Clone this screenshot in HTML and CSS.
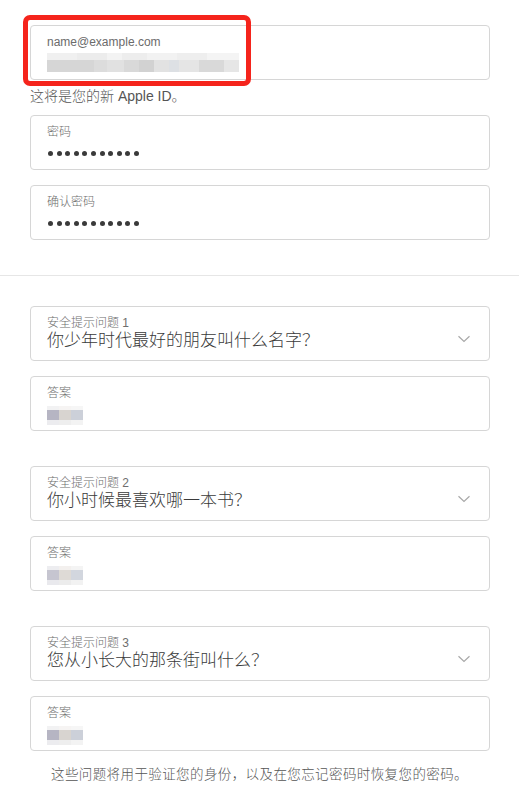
FILE: index.html
```html
<!DOCTYPE html>
<html lang="zh-CN">
<head>
<meta charset="utf-8">
<title>Apple ID</title>
<link rel="stylesheet" href="styles.css">
</head>
<body>
<main class="page">
  <section class="account">
    <div class="field">
      <div class="label label-email">name@example.com</div>
      <div class="value"><span class="mosaic mosaic-email"></span></div>
      <span class="highlight"></span>
    </div>
    <p class="hint">这将是您的新 Apple ID。</p>
    <div class="field">
      <div class="label">密码</div>
      <div class="value dots"><span></span><span></span><span></span><span></span><span></span><span></span><span></span><span></span><span></span><span></span><span></span></div>
    </div>
    <div class="field">
      <div class="label">确认密码</div>
      <div class="value dots"><span></span><span></span><span></span><span></span><span></span><span></span><span></span><span></span><span></span><span></span><span></span></div>
    </div>
  </section>

  <hr class="divider">

  <section class="security">
    <div class="group">
      <div class="field select">
        <div class="select-body">
          <div class="label">安全提示问题 1</div>
          <div class="question">你少年时代最好的朋友叫什么名字？</div>
        </div>
        <svg class="chevron" width="14" height="8" viewBox="0 0 14 8"><path d="M1.5 1.2 L7 6.4 L12.5 1.2" fill="none" stroke="#a8a8a8" stroke-width="1.2"/></svg>
      </div>
      <div class="field">
        <div class="label">答案</div>
        <div class="value"><span class="mosaic mosaic-answer"></span></div>
      </div>
    </div>

    <div class="group">
      <div class="field select">
        <div class="select-body">
          <div class="label">安全提示问题 2</div>
          <div class="question">你小时候最喜欢哪一本书？</div>
        </div>
        <svg class="chevron" width="14" height="8" viewBox="0 0 14 8"><path d="M1.5 1.2 L7 6.4 L12.5 1.2" fill="none" stroke="#a8a8a8" stroke-width="1.2"/></svg>
      </div>
      <div class="field">
        <div class="label">答案</div>
        <div class="value"><span class="mosaic mosaic-answer alt"></span></div>
      </div>
    </div>

    <div class="group">
      <div class="field select">
        <div class="select-body">
          <div class="label">安全提示问题 3</div>
          <div class="question">您从小长大的那条街叫什么？</div>
        </div>
        <svg class="chevron" width="14" height="8" viewBox="0 0 14 8"><path d="M1.5 1.2 L7 6.4 L12.5 1.2" fill="none" stroke="#a8a8a8" stroke-width="1.2"/></svg>
      </div>
      <div class="field">
        <div class="label">答案</div>
        <div class="value"><span class="mosaic mosaic-answer"></span></div>
      </div>
    </div>
  </section>

  <p class="footnote">这些问题将用于验证您的身份，以及在您忘记密码时恢复您的密码。</p>
</main>
</body>
</html>
```

FILE: styles.css
```css
* { box-sizing: border-box; }

html, body {
  margin: 0;
  padding: 0;
  background: #ffffff;
}

body {
  font-family: "Liberation Sans", "Noto Sans CJK SC", sans-serif;
  color: #333333;
}

.page {
  padding-top: 25px;
}

.account,
.security {
  padding: 0 29px 0 30px;
  display: flex;
  flex-direction: column;
}

.account {
  gap: 15px;
}

.security {
  gap: 35px;
}

.group {
  display: flex;
  flex-direction: column;
  gap: 15px;
}

.field {
  position: relative;
  height: 55px;
  border: 1px solid #d6d6d6;
  border-radius: 4px;
  padding: 9px 16px 0 16px;
  background: #ffffff;
}

.label {
  font-size: 12px;
  line-height: 14px;
  font-weight: 300;
  color: #6e6e6e;
  height: 14px;
}

.label-email {
  color: #6b6b6b;
  font-weight: 400;
}

.value {
  height: 20px;
  margin-top: 4px;
  display: flex;
  align-items: center;
}

.dots {
  gap: 3.6px;
  padding-left: 1px;
}

.dots span {
  width: 5px;
  height: 5px;
  border-radius: 50%;
  background: #3a3a3a;
}

.hint {
  margin: -8px 0 -5px 0;
  font-size: 14px;
  line-height: 18px;
  font-weight: 300;
  color: #555555;
}

.divider {
  margin: 35px 0 30px 0;
  border: 0;
  border-top: 1px solid #e6e6e6;
  height: 0;
}

.select {
  display: flex;
  align-items: center;
  padding-right: 18px;
}

.select-body {
  flex: 1;
  align-self: flex-start;
}

.question {
  font-size: 17px;
  line-height: 22px;
  font-weight: 300;
  color: #3a3a3a;
}

.chevron {
  flex: none;
  margin-top: 1px;
}

.mosaic {
  display: block;
}

.mosaic-email {
  width: 192px;
  height: 19px;
  margin-top: -1px;
  background:
    linear-gradient(to right,
      #f0f0f0 0 30px, #ececec 30px 60px, #f3f3f3 60px 75px, #ededed 75px 100px,
      #f2f2f2 100px 130px, #eeeeee 130px 160px, #f4f4f4 160px 192px) 0 0 / 192px 7px no-repeat,
    linear-gradient(to right,
      #d6d6d6 0 47px, #dcdcdc 47px 60px, #e1e1e1 60px 77px, #d9d9d9 77px 92px,
      #d2d2d2 92px 107px, #e2e2e2 107px 122px, #dde0e4 122px 132px, #e5e5e5 132px 152px,
      #d9d9d9 152px 177px, #e6e6e6 177px 192px) 0 7px / 192px 12px no-repeat;
}

.mosaic-answer {
  width: 36px;
  height: 19px;
  margin-top: 2px;
  background:
    linear-gradient(to right, #f2f2f3 0 12px, #f6f4f3 12px 24px, #f6f6f6 24px 36px) 0 0 / 36px 4px no-repeat,
    linear-gradient(to right, #b6b5c3 0 12px, #d8d4d0 12px 24px, #ccd0d9 24px 36px) 0 4px / 36px 10px no-repeat,
    linear-gradient(to right, #ececef 0 12px, #eeeeee 12px 24px, #f3f3f3 24px 36px) 0 14px / 36px 5px no-repeat;
}

.mosaic-answer.alt {
  background:
    linear-gradient(to right, #ededf0 0 12px, #f3f0ee 12px 24px, #f4f4f4 24px 36px) 0 0 / 36px 4px no-repeat,
    linear-gradient(to right, #c6c5d0 0 12px, #dedad6 12px 24px, #d2d6de 24px 36px) 0 4px / 36px 10px no-repeat,
    linear-gradient(to right, #e9e9ed 0 12px, #ececec 12px 24px, #f2f2f2 24px 36px) 0 14px / 36px 5px no-repeat;
}

.highlight {
  position: absolute;
  left: -8px;
  top: -11px;
  width: 228px;
  height: 71px;
  border: 5px solid #f5241c;
  border-radius: 7px;
  pointer-events: none;
}

.footnote {
  margin: 15px 0 0 0;
  text-align: center;
  font-size: 13.5px;
  line-height: 18px;
  font-weight: 300;
  letter-spacing: 0.4px;
  color: #555555;
}
```
